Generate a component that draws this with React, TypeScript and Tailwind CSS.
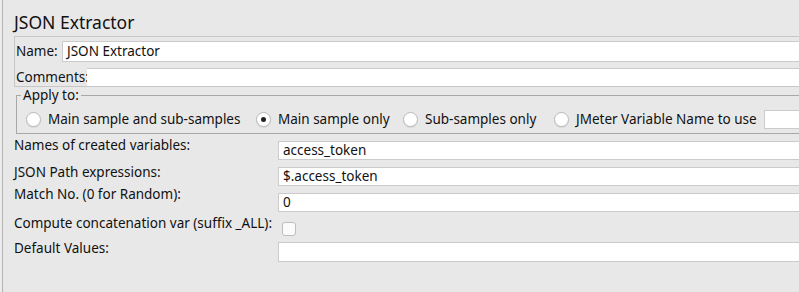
import React from 'react';

const fieldBox = 'bg-white border border-[#cbcbcb]';

const applyOptions = [
  { label: 'Main sample and sub-samples', width: 'w-[230px]', checked: false },
  { label: 'Main sample only', width: 'w-[147px]', checked: true },
  { label: 'Sub-samples only', width: 'w-[151px]', checked: false },
  { label: 'JMeter Variable Name to use', width: 'w-[210px]', checked: false },
];

const Radio: React.FC<{ checked: boolean }> = ({ checked }) => (
  <span className="w-[15px] h-[15px] shrink-0 rounded-full bg-white border border-[#b9b9b9] shadow-[0_1px_1px_rgba(0,0,0,0.08)] flex items-center justify-center">
    {checked && <span className="w-[5px] h-[5px] rounded-full bg-[#222]" />}
  </span>
);

const App: React.FC = () => {
  return (
    <div className="w-[799px] h-[292px] overflow-hidden bg-[#e8e8e8] flex font-['Noto_Sans',sans-serif] text-[13.5px] text-[#111]">
      <div className="w-[2px] shrink-0 bg-[#ececec]" />
      <div className="w-[840px] shrink-0 border-l border-[#b3b3b3] pl-[11px] flex flex-col">
        {/* Title */}
        <h1 className="pt-[11px] text-[17.5px] leading-[22px]">JSON Extractor</h1>

        {/* Name / Comments */}
        <div className="mt-[3px] border border-[#c6c6c6] pt-[4px] pl-[1px]">
          <div className="flex items-center">
            <span className="w-[46px] shrink-0">Name:</span>
            <div className={`flex-1 h-[21px] ${fieldBox} pl-[4px] leading-[19px]`}>JSON Extractor</div>
          </div>
          <div className="flex items-center mt-[6px]">
            <span className="w-[71px] shrink-0 leading-[16px]">Comments:</span>
            <div className="flex-1 h-[18px] bg-white border-t border-[#cbcbcb]" />
          </div>
        </div>

        {/* Apply to */}
        <fieldset className="ml-[2px] border border-[#a8a8a8] pt-[7px] pb-[4px]">
          <legend className="ml-[4px] px-[2px] leading-[16px]">Apply to:</legend>
          <div className="flex items-center h-[19px] pl-[9px]">
            {applyOptions.map((opt) => (
              <div key={opt.label} className={`${opt.width} shrink-0 flex items-center gap-[7px]`}>
                <Radio checked={opt.checked} />
                <span className="whitespace-nowrap">{opt.label}</span>
              </div>
            ))}
            <div className={`w-[80px] h-[19px] ${fieldBox}`} />
          </div>
        </fieldset>

        {/* Extractor settings */}
        <div className="flex flex-col mt-[7px]">
          <div className="flex items-start h-[19px]">
            <span className="w-[264px] shrink-0 leading-none -mt-[2px]">Names of created variables:</span>
            <div className={`flex-1 h-[19px] ${fieldBox} pl-[4px] leading-[17px]`}>access_token</div>
          </div>
          <div className="flex items-start h-[19px] mt-[7px]">
            <span className="w-[264px] shrink-0 leading-none -mt-[1px]">JSON Path expressions:</span>
            <div className={`flex-1 h-[19px] ${fieldBox} pl-[4px] leading-[17px]`}>$.access_token</div>
          </div>
          <div className="flex items-start h-[19px] mt-[7px]">
            <span className="w-[264px] shrink-0 leading-none -mt-[5px]">Match No. (0 for Random):</span>
            <div className={`flex-1 h-[19px] ${fieldBox} pl-[4px] leading-[17px]`}>0</div>
          </div>
          <div className="flex items-start h-[18px] mt-[7px]">
            <span className="w-[264px] shrink-0 leading-none -mt-[2px]">Compute concatenation var (suffix _ALL):</span>
            <span className="ml-[4px] mt-[3px] w-[14px] h-[14px] rounded-[3px] bg-[#fbfbfb] border border-[#bdbdbd]" />
          </div>
          <div className="flex items-start h-[20px] mt-[5px]">
            <span className="w-[264px] shrink-0 leading-none">Default Values:</span>
            <div className={`flex-1 h-[20px] ${fieldBox}`} />
          </div>
        </div>
      </div>
    </div>
  );
};

export default App;
